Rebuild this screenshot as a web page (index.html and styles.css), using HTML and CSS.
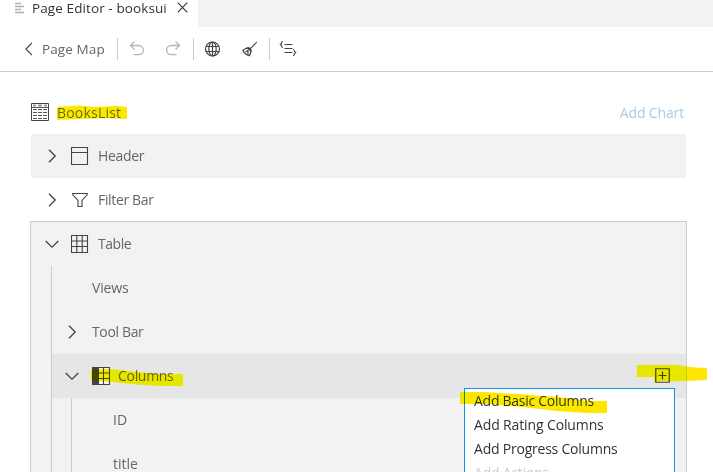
FILE: index.html
```html
<!DOCTYPE html>
<html lang="en">
<head>
<meta charset="utf-8">
<title>Page Editor - booksui</title>
<link rel="stylesheet" href="styles.css">
</head>
<body>
<header class="tabs">
  <div class="tab">
    <svg class="tab-icon" width="11" height="12" viewBox="0 0 11 12"><path d="M0 1.500h6M0 4.500h9M0 7.500h6M0 10.500h9" stroke="#b0b0b0" stroke-width="1.300"/></svg>
    <span class="tab-title">Page Editor - booksui</span>
    <svg class="tab-close" width="11" height="11" viewBox="0 0 11 11"><path d="M.7.7l9.600 9.600M10.300.7L.7 10.300" stroke="#333" stroke-width="1.100"/></svg>
  </div>
</header>
<nav class="toolbar">
  <svg class="back" width="8" height="14" viewBox="0 0 8 14"><path d="M7 .8L1 7l6 6.200" fill="none" stroke="#444" stroke-width="1.200"/></svg>
  <span class="map">Page Map</span>
  <div class="group history">
    <svg width="16" height="16" viewBox="0 0 16 16" fill="none" stroke="#b5b5b5" stroke-width="1.300"><path d="M5.500.5l-4 4 4 4M1.500 4.500h8.300a4.600 4.600 0 0 1 0 9.200H4.500"/></svg>
    <svg width="16" height="16" viewBox="0 0 16 16" fill="none" stroke="#b5b5b5" stroke-width="1.300"><path d="M9.500.5l4 4-4 4M13.500 4.500H5.200a4.600 4.600 0 0 0 0 9.200h5.300"/></svg>
  </div>
  <div class="group tools">
    <svg width="16" height="16" viewBox="0 0 16 16" fill="none" stroke="#444" stroke-width="1.200"><circle cx="7.500" cy="8" r="7"/><ellipse cx="7.500" cy="8" rx="3.700" ry="7"/><path d="M7.500 1v14M1.200 5.500h12.600M1.200 10.500h12.600"/></svg>
    <svg width="16" height="16" viewBox="0 0 16 16" fill="none" stroke="#444" stroke-width="1.200"><path d="M14.800 1.200L8.300 7.700M.8 9.200l4.500-2.400c2-.6 4.300 1.500 3.800 3.500L7.500 14.700C4.700 14 2 12 .8 9.200zM4.500 7.300c2.300.2 4 1.800 4.500 3.700M3.500 11l2.500-1.500v4"/></svg>
  </div>
  <div class="group script">
    <svg width="18" height="16" viewBox="0 0 18 16" fill="none" stroke="#444" stroke-width="1.100"><path d="M5.500 3.500h8M5.500 7.500h8M5.500 11.500h8M3.800.5c-1.300 0-1.300.5-1.300 2L1.300 3.500l1.200 1c0 1.500 0 2 1.300 2M14 8.500c1.500 0 1.500.5 1.500 2l1.200 1-1.200 1c0 1.500 0 2-1.500 2"/></svg>
  </div>
</nav>
<main class="outline">
  <div class="title-row">
    <svg width="18" height="18" viewBox="0 0 18 18"><path d="M.5.500h17v17H.5z" fill="#fff" stroke="#444"/><path d="M1 4.500h16" stroke="#555"/><path d="M2 2.500h3M7 2.500h4M13 2.500h3" stroke="#999" stroke-width="2"/><path d="M2 6.500h4M7 6.500h4M12 6.500h4M2 9.500h4M7 9.500h4M12 9.500h4M2 12.500h4M7 12.500h4M12 12.500h4M2 15.500h4M7 15.500h4M12 15.500h4" stroke="#555"/></svg>
    <span class="name">BooksList</span>
    <span class="add-chart">Add Chart</span>
  </div>
  <div class="row shaded">
    <svg class="chev" width="14" height="14" viewBox="0 0 14 14"><path d="M4 .7L10.200 7 4 13.300"/></svg>
    <svg class="icon" width="18" height="18" viewBox="0 0 18 18"><path d="M.5.500h16v17H.5zM1 5.500h15"/></svg>
    <span class="t-header">Header</span>
  </div>
  <div class="row">
    <svg class="chev" width="14" height="14" viewBox="0 0 14 14"><path d="M4 .7L10.200 7 4 13.300"/></svg>
    <svg class="icon" width="18" height="18" viewBox="0 0 18 18"><path d="M1.700 2.500h14.600v1L11 9.500v6H7v-6l-5.300-6z"/></svg>
    <span class="t-filter">Filter Bar</span>
  </div>
  <section class="selected">
    <div class="row">
      <svg class="chev" width="14" height="14" viewBox="0 0 14 14"><path d="M.7 4L7 10.200 13.300 4"/></svg>
      <svg class="icon" width="18" height="18" viewBox="0 0 18 18"><path d="M.5.500h16v17H.5zM1 6h15M1 11.500h15M5.800 1v16M11.200 1v16"/></svg>
      <span class="t-table">Table</span>
    </div>
    <div class="branch">
      <div class="row leaf"><span class="t-views">Views</span></div>
      <div class="row">
        <svg class="chev" width="14" height="14" viewBox="0 0 14 14"><path d="M4 .7L10.200 7 4 13.300"/></svg>
        <span class="t-toolbar">Tool Bar</span>
      </div>
      <div class="row active">
        <svg class="chev" width="14" height="14" viewBox="0 0 14 14"><path d="M.7 4L7 10.200 13.300 4"/></svg>
        <svg class="icon" width="18" height="18" viewBox="0 0 18 18"><path d="M.5.500h17v17H.5z" fill="#f5f5f5"/><path d="M1 6h16M1 11.500h16M11.500 1v16"/><path d="M0 0h7v18H0z" fill="#444" stroke="none"/></svg>
        <span class="t-columns">Columns</span>
        <svg class="add" width="15" height="15" viewBox="0 0 15 15"><path d="M.75.750h13.500v13.500H.75zM7.500 3.500v8M3.500 7.500h8" fill="none" stroke="#444" stroke-width="1.200"/></svg>
      </div>
      <div class="branch nested">
        <div class="row"><span class="t-id">ID</span></div>
        <div class="row"><span class="t-title">title</span></div>
      </div>
    </div>
  </section>
</main>
<div class="menu">
  <div class="item"><span class="m-basic">Add Basic Columns</span></div>
  <div class="item"><span class="m-rating">Add Rating Columns</span></div>
  <div class="item"><span class="m-progress">Add Progress Columns</span></div>
  <div class="item disabled"><span class="m-actions">Add Actions</span></div>
</div>
<svg class="marker" width="713" height="472" viewBox="0 0 713 472">
  <path d="M57 107l22-1.500 15 1.500 22-1 11 1v12l-20-1-28 1-22 1z"/>
  <path d="M91 370l18-1 30 3 20 2h24v12h-22l-25-1.500-28-3-17-1z"/>
  <path d="M637 365h40l18 2.500 12 .5v12l-22 1-31 .5v-4.500h-17z"/>
  <path d="M460 392h24l32 2 42 3 30 4h19v12h-20l-30-2-34-4-34-3h-29z"/>
</svg>
</body>
</html>
```

FILE: styles.css
```css
* { box-sizing: border-box; }
body {
  margin: 0;
  width: 713px;
  height: 472px;
  overflow: hidden;
  background: #fff;
  color: #666;
  font: 14px/20px "Open Sans", "Noto Sans", sans-serif;
}
svg { display: block; flex: none; }
span { white-space: nowrap; }
.tabs { height: 27px; background: #f2f2f2; }
.tab { width: 198px; height: 27px; padding-left: 15px; background: #fff; display: flex; color: #333; }
.tab-icon { margin-top: 2px; }
.tab-title { width: 135px; margin: -2px 0 0 6px; font-size: 13.5px; letter-spacing: .1px; }
.tab-close { margin: 2px 0 0 10px; }
.toolbar { height: 45px; border-bottom: 1px solid #ccc; display: flex; align-items: center; padding-left: 25px; }
.map { width: 66px; margin-left: 9px; font-size: 13.5px; letter-spacing: .1px; }
.group { height: 22px; border-left: 1px solid #ccc; display: flex; align-items: center; margin-top: -1px; }
.history { width: 76px; margin-left: 9px; padding-left: 11px; gap: 21px; }
.tools { width: 76px; padding-left: 11px; gap: 21px; }
.script { padding-left: 9px; }
.outline { padding: 18px 26px 0 30px; }
.title-row { height: 44px; display: flex; align-items: center; padding: 0 3px 0 1px; }
.name { margin: 1px 0 0 8px; letter-spacing: .2px; }
.add-chart { margin: 1px 0 0 auto; color: #a6cce5; letter-spacing: -.15px; }
.row { height: 44px; display: flex; align-items: center; padding-left: 15px; }
.shaded { margin: 0 1px; background: #f2f2f2; padding-left: 14px; }
.shaded + .row { height: 43px; }
.chev { fill: none; stroke: #444; stroke-width: 1.3; }
.icon { margin: 0 9px 0 12px; fill: none; stroke: #444; stroke-width: 1.1; }
.selected { border: 1px solid #ccc; background: #f2f2f2; height: 270px; }
.selected > .row { padding-left: 14px; }
.branch { margin-left: 20px; border-left: 1px solid #ccc; }
.branch .row { padding-left: 13px; }
.branch .leaf { padding-left: 40px; }
.t-header, .t-filter { letter-spacing: -.35px; }
.t-table { letter-spacing: -.45px; }
.t-views { letter-spacing: -.15px; }
.t-toolbar { margin-left: 13px; letter-spacing: -.35px; }
.t-columns { letter-spacing: -.3px; }
.active { background: #e6e6e6; }
.active .icon { margin: 0 8px 0 13px; }
.add { margin: -2px 16px 0 auto; }
.nested { margin-left: 19px; height: 88px; }
.nested .row { padding-left: 41px; }
.menu { position: absolute; left: 464px; top: 388px; width: 211px; height: 100px; border: 1px solid #0a93ea; background: #fff; color: #333; }
.item { height: 24px; padding-left: 9px; line-height: 24px; }
.m-basic { letter-spacing: -.27px; }
.m-rating { letter-spacing: -.13px; }
.m-progress, .m-actions { letter-spacing: -.22px; }
.disabled { color: #ccc; }
.marker { position: absolute; left: 0; top: 0; fill: #ffe600; mix-blend-mode: darken; pointer-events: none; }
```
